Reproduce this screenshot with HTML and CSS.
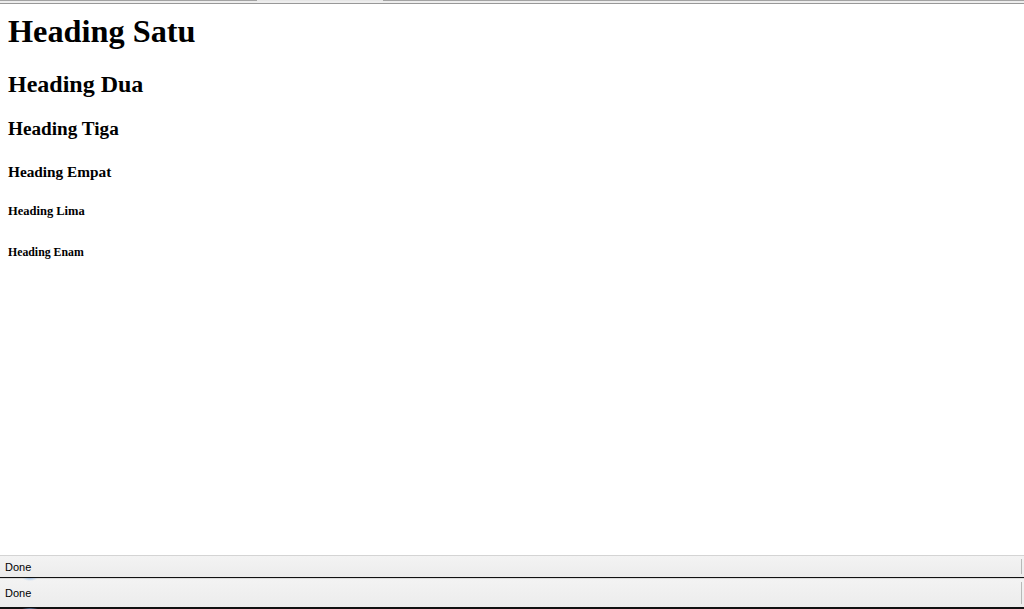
FILE: index.html
```html
<!DOCTYPE html>
<html>
<head>
<meta charset="utf-8">
<title>Heading</title>
<link rel="stylesheet" href="styles.css">
</head>
<body>
<div class="topbar">
  <div class="topline">
    <span class="seg dark seg-a"></span>
    <span class="seg light seg-b"></span>
    <span class="seg dark seg-c"></span>
  </div>
  <div class="topfill"></div>
  <div class="topedge"></div>
</div>
<main class="content">
  <h1 class="h h1">Heading Satu</h1>
  <h2 class="h h2">Heading Dua</h2>
  <h3 class="h h3">Heading Tiga</h3>
  <h4 class="h h4">Heading Empat</h4>
  <h5 class="h h5">Heading Lima</h5>
  <h6 class="h h6">Heading Enam</h6>
</main>
<footer class="status status-one"><span class="status-text">Done</span><span class="status-sep"></span></footer>
<div class="rule"><span class="glow"></span></div>
<footer class="status status-two"><span class="status-text">Done</span><span class="status-sep"></span></footer>
<div class="rule rule-bottom"><span class="glow"></span></div>
</body>
</html>
```
FILE: styles.css
```css
html, body {
  margin: 0;
  padding: 0;
  background: #ffffff;
}
body {
  width: 1024px;
  height: 609px;
  display: flex;
  flex-direction: column;
  overflow: hidden;
  font-family: "Liberation Serif", "Times New Roman", serif;
  color: #000;
}
.topbar {
  height: 4px;
  display: flex;
  flex-direction: column;
  flex: none;
}
.topline {
  height: 1px;
  display: flex;
}
.seg { display: block; height: 1px; }
.seg.dark { background: #a3a3a3; }
.seg.light { background: #e6e6e6; }
.seg-a { width: 257px; }
.seg-b { width: 126px; }
.seg-c { flex: 1; }
.topfill { height: 2px; background: #ededed; }
.topedge { height: 1px; background: #989898; }

.content {
  flex: 1;
  padding: 0 8px;
  display: flex;
  flex-direction: column;
  align-items: flex-start;
}
.h {
  font-weight: bold;
  margin: 0;
}
.h1 { font-size: 32.3px; line-height: 37px; margin-top: 9px; }
.h2 { font-size: 24px; line-height: 28px; margin-top: 20px; }
.h3 { font-size: 19.2px; line-height: 22px; margin-top: 20px; }
.h4 { font-size: 15.3px; line-height: 18px; margin-top: 23px; }
.h5 { font-size: 12.5px; line-height: 15px; margin-top: 23px; }
.h6 { font-size: 11.8px; line-height: 12px; margin-top: 27px; }

.status {
  flex: none;
  display: flex;
  align-items: center;
  justify-content: space-between;
  background: linear-gradient(#f3f3f3, #ececec);
  font-family: "Liberation Sans", Arial, sans-serif;
  font-size: 11px;
  color: #000;
  padding-left: 5px;
}
.status-one {
  height: 21px;
  border-top: 1px solid #d4d4d4;
}
.status-two {
  height: 28px;
  border-top: 1px solid #dcdcdc;
}
.status-sep {
  width: 1px;
  align-self: stretch;
  margin: 3px 2px 3px 0;
  background: #b8b8b8;
}
.rule {
  flex: none;
  height: 1px;
  background: #111;
  position: relative;
}
.rule-bottom { height: 2px; }
.glow {
  position: absolute;
  left: 22px;
  top: 1px;
  width: 16px;
  height: 3px;
  background: radial-gradient(ellipse at center top, rgba(120,170,230,0.6), rgba(120,170,230,0) 70%);
}
```
